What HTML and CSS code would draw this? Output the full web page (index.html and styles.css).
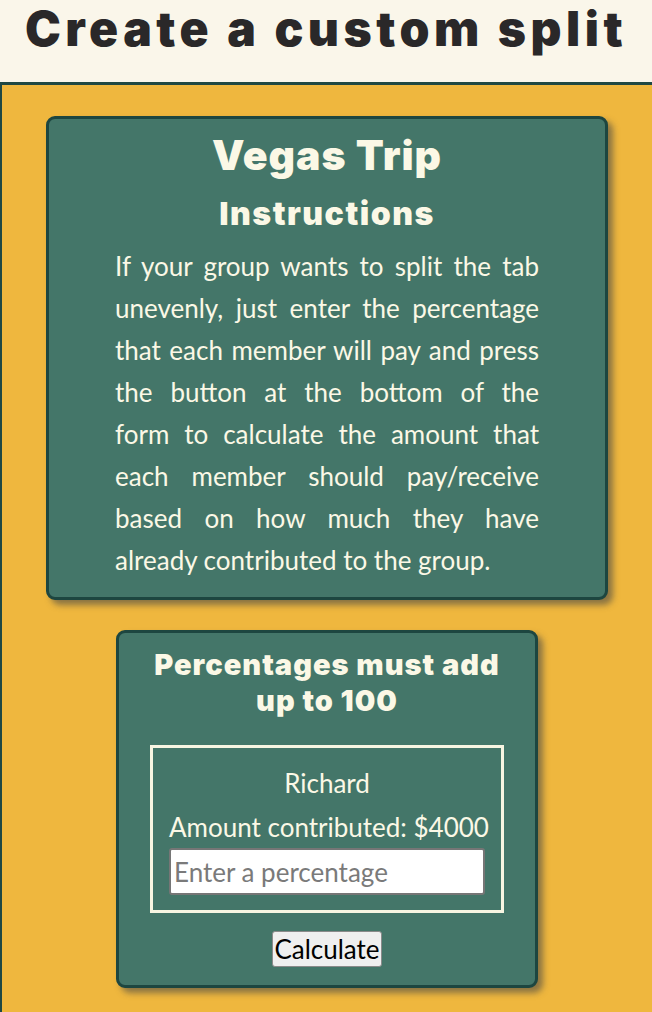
FILE: index.html
```html
<!DOCTYPE html>
<html lang="en">
<head>
<meta charset="utf-8">
<title>Create a custom split</title>
<link rel="stylesheet" href="styles.css">
</head>
<body>
<header class="page-header">
  <h1 class="page-title">Create a custom split</h1>
</header>
<main class="stage">
  <section class="card card-instructions">
    <h2 class="trip-name">Vegas Trip</h2>
    <h3 class="card-heading">Instructions</h3>
    <p class="instructions">
      <span class="jline">If your group wants to split the tab</span>
      <span class="jline">unevenly, just enter the percentage</span>
      <span class="jline">that each member will pay and press</span>
      <span class="jline">the button at the bottom of the</span>
      <span class="jline">form to calculate the amount that</span>
      <span class="jline">each member should pay/receive</span>
      <span class="jline">based on how much they have</span>
      <span class="lline">already contributed to the group.</span>
    </p>
  </section>
  <form class="card card-form">
    <h3 class="form-heading">Percentages must add up to 100</h3>
    <div class="member">
      <div class="member-name">Richard</div>
      <div class="member-amount">Amount contributed: $4000</div>
      <input class="pct-input" type="text" placeholder="Enter a percentage">
    </div>
    <button class="calc-btn" type="button">Calculate</button>
  </form>
</main>
</body>
</html>
```

FILE: styles.css
```css
html, body {
  margin: 0;
  padding: 0;
}

body {
  background: #efb73e;
  font-family: "Lato", "Open Sans", sans-serif;
  width: 652px;
  overflow: hidden;
}

.page-header {
  background: #faf6ea;
  height: 82px;
  text-align: center;
  overflow: hidden;
}

.page-title {
  margin: 0;
  font-family: "Inter", "Lato", sans-serif;
  font-weight: 900;
  font-size: 48px;
  line-height: 58px;
  letter-spacing: 4.5px;
  color: #2a2829;
  white-space: nowrap;
}

.stage {
  background: #efb73e;
  border-top: 3px solid #1f4843;
  border-left: 2px solid #1f4843;
  padding: 31px 0 40px;
  display: flex;
  flex-direction: column;
  align-items: center;
  gap: 30px;
}

.card {
  background: #447669;
  border: 3px solid #1d4640;
  border-radius: 9px;
  box-shadow: 5px 5px 6px rgba(70, 70, 70, 0.6);
  color: #fbf8e6;
  text-align: center;
  box-sizing: border-box;
}

.card-instructions {
  width: 562px;
  padding: 12px 66px 16px;
}

.trip-name {
  margin: 0;
  font-family: "Inter", "Lato", sans-serif;
  font-weight: 900;
  font-size: 41px;
  line-height: 48px;
  letter-spacing: 1px;
}

.card-heading {
  margin: 15px 0 0;
  font-family: "Inter", "Lato", sans-serif;
  font-weight: 900;
  font-size: 32px;
  line-height: 40px;
  letter-spacing: 1.5px;
}

.instructions {
  margin: 11px 0 0;
  font-size: 26px;
  line-height: 42px;
  text-align: left;
}

.jline {
  display: block;
  text-align: justify;
  text-align-last: justify;
}

.lline {
  display: block;
}

.card-form {
  width: 422px;
  padding: 14px 31px 18px;
  margin: 0;
}

.form-heading {
  margin: 0 -6px;
  font-family: "Inter", "Lato", sans-serif;
  font-weight: 900;
  font-size: 29px;
  line-height: 36px;
  letter-spacing: 1px;
}

.member {
  margin-top: 26px;
  border: 3px solid #f8f5e2;
  padding: 13px 16px 15px;
  font-size: 26px;
}

.member-name {
  line-height: 44px;
}

.member-amount {
  line-height: 40px;
  margin-top: 2px;
  white-space: nowrap;
}

.pct-input {
  display: block;
  box-sizing: border-box;
  width: 316px;
  height: 47px;
  margin: 1px auto 0;
  padding: 0 3px;
  font-family: "Lato", sans-serif;
  font-size: 26px;
  color: #222;
  background: #ffffff;
  border: 2px solid #767676;
  border-radius: 3px;
}

.pct-input::placeholder {
  color: #7a7a7a;
}

.calc-btn {
  margin-top: 18px;
  width: 110px;
  height: 36px;
  padding: 0;
  font-family: "Lato", sans-serif;
  font-size: 26px;
  color: #000;
  background: #efefef;
  border: 1px solid #8a8a8a;
  border-radius: 3px;
}
```
